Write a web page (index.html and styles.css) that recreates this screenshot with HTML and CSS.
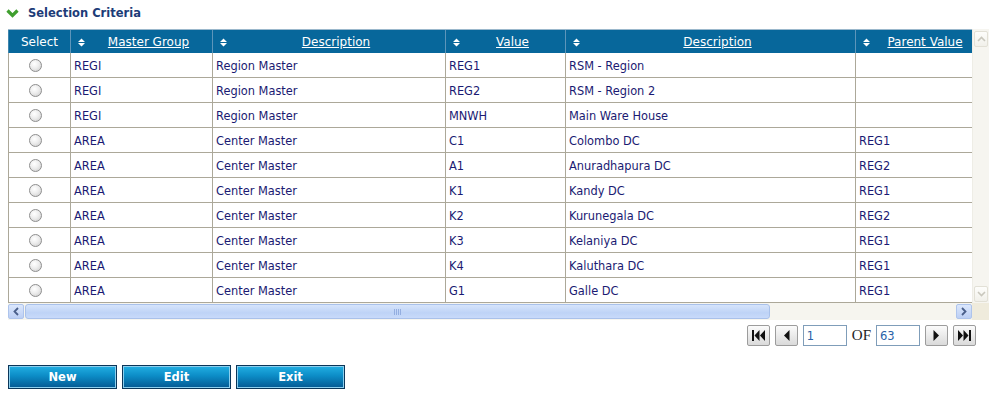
FILE: index.html
```html
<!DOCTYPE html>
<html lang="en">
<head>
<meta charset="utf-8">
<title>Selection Criteria</title>
<link rel="stylesheet" href="styles.css">
</head>
<body>
<div class="page">
  <div class="title">
    <svg class="chev" width="13" height="11" viewBox="0 0 13 11" aria-hidden="true"><path d="M1.5 2.5 L6.5 7.5 L11.5 2.5" fill="none" stroke="#3f9f2f" stroke-width="3.2"/></svg>
    <span>Selection Criteria</span>
  </div>

  <div class="gridwrap">
    <div class="viewport">
      <table class="data">
        <colgroup>
          <col class="c1"><col class="c2"><col class="c3"><col class="c4"><col class="c5"><col class="c6">
        </colgroup>
        <thead>
          <tr>
            <th class="sel">Select</th>
            <th><div class="hcell"><svg class="sort" width="7" height="9" viewBox="0 0 7 9"><path d="M0 4h7L3.5 0.5z M0 5h7L3.5 8.5z" fill="#fff"/></svg><a href="#">Master Group</a></div></th>
            <th><div class="hcell"><svg class="sort" width="7" height="9" viewBox="0 0 7 9"><path d="M0 4h7L3.5 0.5z M0 5h7L3.5 8.5z" fill="#fff"/></svg><a href="#">Description</a></div></th>
            <th><div class="hcell"><svg class="sort" width="7" height="9" viewBox="0 0 7 9"><path d="M0 4h7L3.5 0.5z M0 5h7L3.5 8.5z" fill="#fff"/></svg><a href="#">Value</a></div></th>
            <th><div class="hcell"><svg class="sort" width="7" height="9" viewBox="0 0 7 9"><path d="M0 4h7L3.5 0.5z M0 5h7L3.5 8.5z" fill="#fff"/></svg><a href="#">Description</a></div></th>
            <th><div class="hcell"><svg class="sort" width="7" height="9" viewBox="0 0 7 9"><path d="M0 4h7L3.5 0.5z M0 5h7L3.5 8.5z" fill="#fff"/></svg><a href="#">Parent Value</a></div></th>
          </tr>
        </thead>
        <tbody>
          <tr><td class="sel"><span class="radio"></span></td><td>REGI</td><td>Region Master</td><td>REG1</td><td>RSM - Region</td><td></td></tr>
          <tr><td class="sel"><span class="radio"></span></td><td>REGI</td><td>Region Master</td><td>REG2</td><td>RSM - Region 2</td><td></td></tr>
          <tr><td class="sel"><span class="radio"></span></td><td>REGI</td><td>Region Master</td><td>MNWH</td><td>Main Ware House</td><td></td></tr>
          <tr><td class="sel"><span class="radio"></span></td><td>AREA</td><td>Center Master</td><td>C1</td><td>Colombo DC</td><td>REG1</td></tr>
          <tr><td class="sel"><span class="radio"></span></td><td>AREA</td><td>Center Master</td><td>A1</td><td>Anuradhapura DC</td><td>REG2</td></tr>
          <tr><td class="sel"><span class="radio"></span></td><td>AREA</td><td>Center Master</td><td>K1</td><td>Kandy DC</td><td>REG1</td></tr>
          <tr><td class="sel"><span class="radio"></span></td><td>AREA</td><td>Center Master</td><td>K2</td><td>Kurunegala DC</td><td>REG2</td></tr>
          <tr><td class="sel"><span class="radio"></span></td><td>AREA</td><td>Center Master</td><td>K3</td><td>Kelaniya DC</td><td>REG1</td></tr>
          <tr><td class="sel"><span class="radio"></span></td><td>AREA</td><td>Center Master</td><td>K4</td><td>Kaluthara DC</td><td>REG1</td></tr>
          <tr><td class="sel"><span class="radio"></span></td><td>AREA</td><td>Center Master</td><td>G1</td><td>Galle DC</td><td>REG1</td></tr>
        </tbody>
      </table>
    </div>

    <div class="vscroll" aria-hidden="true">
      <div class="varrow"><svg width="9" height="6" viewBox="0 0 9 6"><path d="M1 5 L4.5 1.5 L8 5" fill="none" stroke="#c9c7bd" stroke-width="1.6"/></svg></div>
      <div class="varrow"><svg width="9" height="6" viewBox="0 0 9 6"><path d="M1 1 L4.5 4.5 L8 1" fill="none" stroke="#c9c7bd" stroke-width="1.6"/></svg></div>
    </div>

    <div class="hscroll" aria-hidden="true">
      <div class="harrow"><svg width="6" height="9" viewBox="0 0 6 9"><path d="M5 1 L1.5 4.5 L5 8" fill="none" stroke="#4a5f8a" stroke-width="1.8"/></svg></div>
      <div class="thumb"><span class="grip"></span></div>
      <div class="track"></div>
      <div class="harrow"><svg width="6" height="9" viewBox="0 0 6 9"><path d="M1 1 L4.5 4.5 L1 8" fill="none" stroke="#4a5f8a" stroke-width="1.8"/></svg></div>
    </div>
    <div class="corner"></div>
  </div>

  <div class="pager">
    <button class="pbtn" type="button" aria-label="First"><svg width="13" height="11" viewBox="0 0 13 11"><rect x="0" y="0" width="2" height="11" fill="#111"/><path d="M7.5 0 L2.5 5.5 L7.5 11z M13 0 L8 5.5 L13 11z" fill="#111"/></svg></button>
    <button class="pbtn" type="button" aria-label="Previous"><svg width="7" height="11" viewBox="0 0 7 11"><path d="M6.5 0 L1 5.5 L6.5 11z" fill="#111"/></svg></button>
    <input class="pinput" type="text" value="1">
    <span class="of">OF</span>
    <input class="pinput" type="text" value="63">
    <button class="pbtn" type="button" aria-label="Next"><svg width="7" height="11" viewBox="0 0 7 11"><path d="M0.5 0 L6 5.5 L0.5 11z" fill="#111"/></svg></button>
    <button class="pbtn" type="button" aria-label="Last"><svg width="13" height="11" viewBox="0 0 13 11"><path d="M0 0 L5 5.5 L0 11z M5.5 0 L10.5 5.5 L5.5 11z" fill="#111"/><rect x="11" y="0" width="2" height="11" fill="#111"/></svg></button>
  </div>

  <div class="actions">
    <button class="btn" type="button">New</button>
    <button class="btn" type="button">Edit</button>
    <button class="btn" type="button">Exit</button>
  </div>
</div>
</body>
</html>
```

FILE: styles.css
```css
* { box-sizing: border-box; }

body {
  margin: 0;
  background: #ffffff;
  font-family: "DejaVu Sans", Verdana, sans-serif;
}

.page {
  width: 992px;
  padding-left: 8px;
}

.title {
  height: 26px;
  margin-left: -2px;
  display: flex;
  align-items: center;
  gap: 9px;
  font-size: 11.5px;
  font-weight: bold;
  color: #1c3c78;
}

.gridwrap {
  margin-top: 3px;
  display: grid;
  grid-template-columns: 964px 17px;
  grid-template-rows: 274px 17px;
}

.viewport {
  overflow: hidden;
  border-top: 1px solid #9bb8cc;
}

table.data {
  width: 973px;
  table-layout: fixed;
  border-collapse: separate;
  border-spacing: 0;
}

.c1 { width: 63px; }
.c2 { width: 142px; }
.c3 { width: 233px; }
.c4 { width: 120px; }
.c5 { width: 290px; }
.c6 { width: 125px; }

.data th {
  height: 23px;
  padding: 1px 0 0 0;
  background: #07679b;
  color: #ffffff;
  font-size: 12px;
  font-weight: normal;
  border-right: 1px solid #5d95ba;
  white-space: nowrap;
}

.data th.sel {
  border-left: 1px solid #3f85ad;
  text-align: center;
}

.hcell {
  display: flex;
  align-items: center;
  padding-left: 7px;
}

.hcell .sort { flex: none; }

.hcell a {
  flex: 1;
  text-align: center;
  color: #ffffff;
  text-decoration: underline;
}

.data td {
  height: 25px;
  padding: 2px 3px 0 3px;
  font-size: 11.4px;
  color: #1a1a72;
  white-space: nowrap;
  overflow: hidden;
  border-right: 1px solid #aca899;
  border-bottom: 1px solid #aca899;
}

.data td.sel {
  border-left: 1px solid #aca899;
  padding-left: 20px;
  padding-top: 0;
}

.radio {
  display: inline-block;
  width: 13px;
  height: 13px;
  border-radius: 50%;
  border: 1px solid #8e8e8e;
  background: radial-gradient(circle at 40% 35%, #ffffff 0%, #ededed 45%, #c9c9c9 100%);
  vertical-align: middle;
}

/* vertical scrollbar (disabled) */
.vscroll {
  background: #f6f5f0;
  border-left: 1px solid #eeede6;
  display: flex;
  flex-direction: column;
  justify-content: space-between;
  padding: 2px 1px 1px 1px;
}

.varrow {
  height: 16px;
  border: 1px solid #e2e0d6;
  border-radius: 2px;
  background: linear-gradient(#fdfdfb, #f1f0ea);
  display: flex;
  align-items: center;
  justify-content: center;
}

/* horizontal scrollbar */
.hscroll {
  display: flex;
  background: #f6f5ef;
  padding: 1px 0;
}

.harrow {
  flex: none;
  width: 16px;
  border: 1px solid #aec4ec;
  border-radius: 2px;
  background: linear-gradient(#dbe7fc, #bccff4);
  display: flex;
  align-items: center;
  justify-content: center;
}

.thumb {
  flex: none;
  width: 745px;
  margin-left: 1px;
  border: 1px solid #a9c1ea;
  border-radius: 3px;
  background: linear-gradient(#d6e4fb, #bed3f6 60%, #c8dafa);
  display: flex;
  align-items: center;
  justify-content: center;
}

.grip {
  width: 7px;
  height: 6px;
  background: repeating-linear-gradient(90deg, #94aee0 0 1px, transparent 1px 2px);
}

.track { flex: 1; }

.corner { background: #efebdc; }

/* pager */
.pager {
  width: 968px;
  margin-top: 5px;
  height: 21px;
  display: flex;
  justify-content: flex-end;
  align-items: center;
  gap: 5px;
}

.pbtn {
  width: 23px;
  height: 21px;
  padding: 0;
  border: 1px solid #9c9c9c;
  border-radius: 2px;
  background: linear-gradient(#fbfbfb, #dadada);
  display: flex;
  align-items: center;
  justify-content: center;
}

.pinput {
  width: 44px;
  height: 21px;
  border: 1px solid #7f9db9;
  padding: 0 3px;
  font-family: "DejaVu Sans", Verdana, sans-serif;
  font-size: 11.5px;
  color: #2a62a8;
  background: #ffffff;
}

.of {
  font-family: "Liberation Serif", "Times New Roman", serif;
  font-size: 15px;
  color: #222222;
}

/* action buttons */
.actions {
  margin-top: 19px;
  display: flex;
  gap: 5px;
}

.btn {
  width: 109px;
  height: 24px;
  padding: 0;
  border: 1px solid #0b3659;
  box-shadow: inset 0 0 0 1px #8ccfee;
  background: linear-gradient(#22afe3 0%, #0c8cc6 45%, #045892 100%);
  color: #ffffff;
  font-family: "DejaVu Sans", Verdana, sans-serif;
  font-size: 11.5px;
  font-weight: bold;
}
```
